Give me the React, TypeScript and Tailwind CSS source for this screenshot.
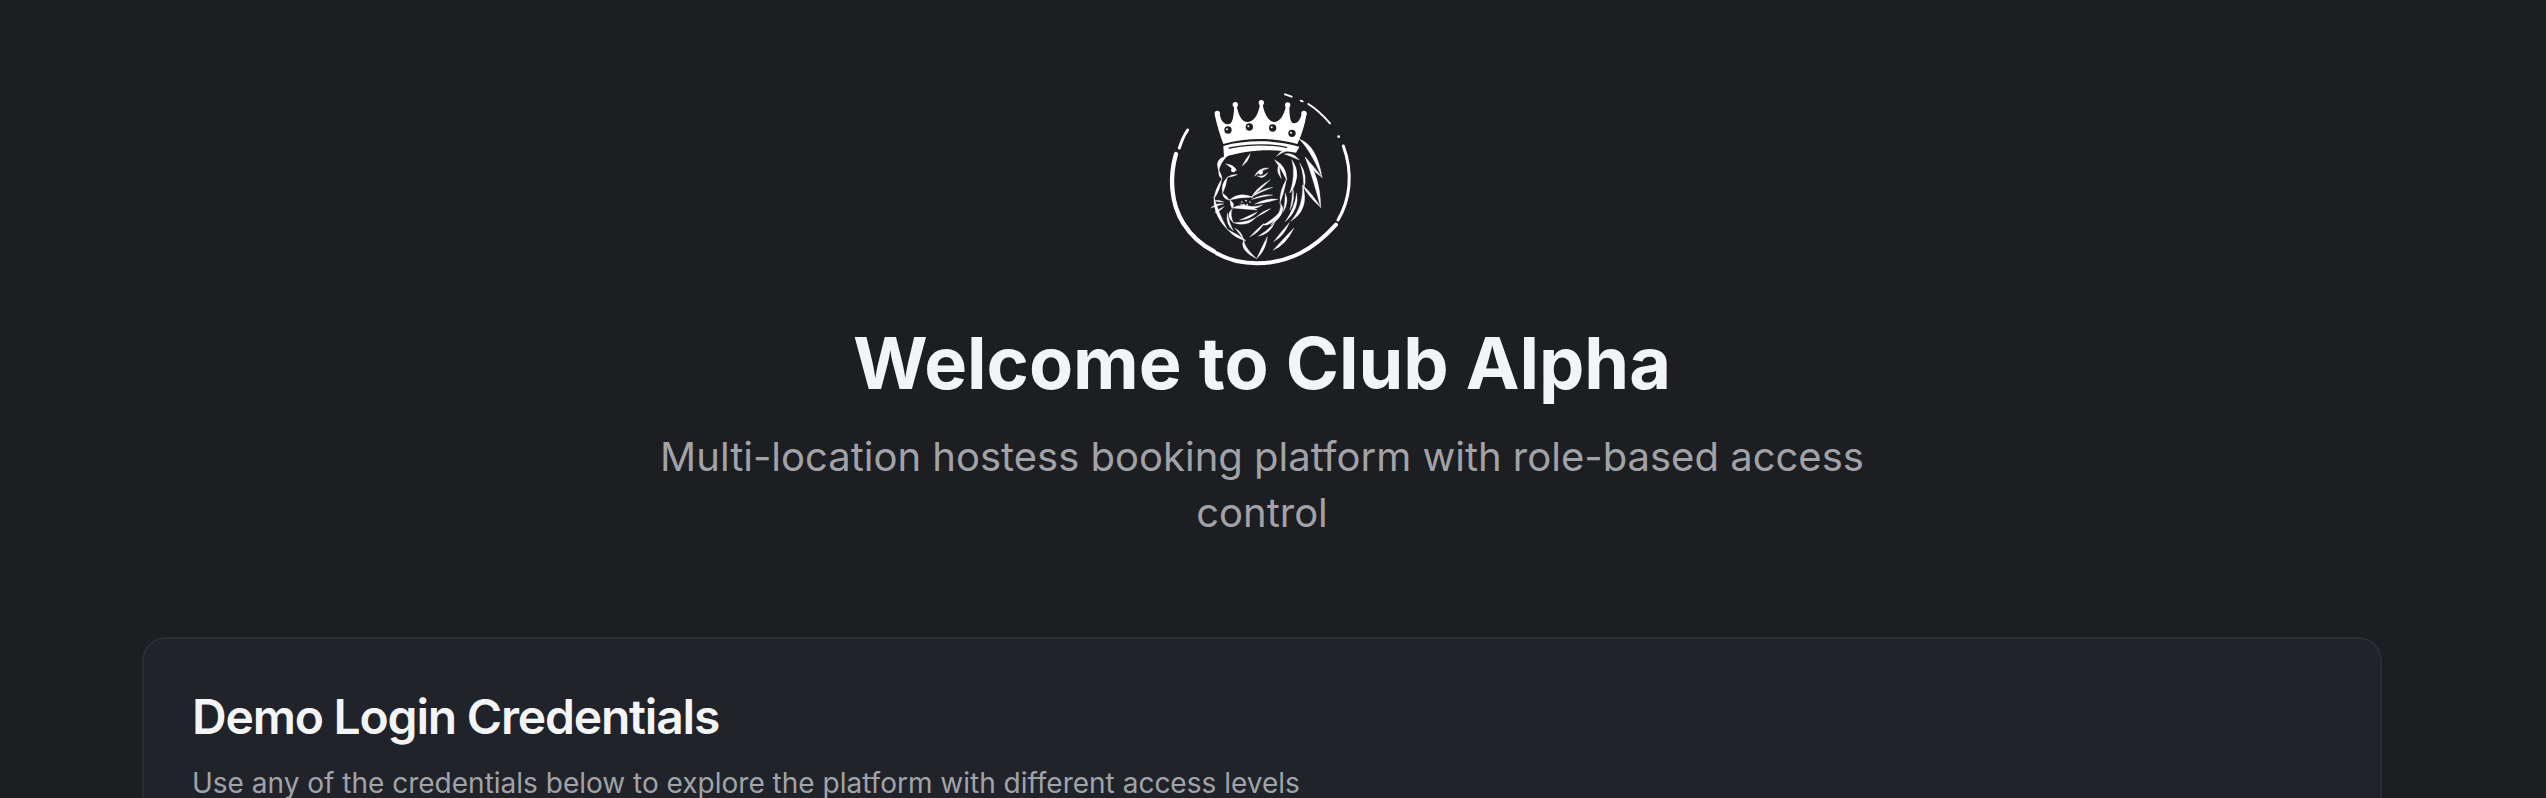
// x0, y0, cx, cy, x1, y1, width : one tapered brush stroke of the lion drawing
const strokes: number[][] = [
  // head top and left outline
  [262, 228, 232, 240, 236, 272, 8],
  [236, 268, 240, 290, 246, 296, 4],
  [246, 296, 232, 330, 222, 356, 5],
  [222, 350, 226, 400, 262, 448, 6],
  [262, 448, 290, 470, 318, 482, 5],
  [330, 222, 322, 240, 306, 258, 4],
  // brow, left eye, bridge of the nose
  [258, 252, 276, 258, 290, 272, 5],
  [262, 292, 250, 315, 248, 340, 6],
  [248, 340, 254, 352, 268, 360, 5],
  [262, 292, 276, 286, 292, 284, 3],
  // right eye
  [344, 288, 360, 266, 386, 264, 4],
  [352, 288, 368, 296, 384, 278, 3],
  [390, 300, 350, 330, 335, 352, 4],
  // muzzle, nose
  [268, 360, 300, 342, 340, 352, 6],
  [270, 360, 280, 376, 276, 384, 6],
  [276, 384, 310, 376, 352, 390, 7],
  [300, 372, 335, 392, 368, 374, 4],
  // whiskers
  [335, 350, 365, 330, 398, 322, 3],
  [336, 358, 370, 345, 398, 345, 3],
  [345, 372, 380, 360, 414, 358, 5],
  [250, 372, 232, 372, 212, 384, 3],
  [250, 366, 236, 362, 224, 362, 3],
  [252, 380, 238, 390, 224, 398, 3],
  // mouth and jaw
  [276, 388, 262, 405, 280, 428, 5],
  [280, 428, 320, 436, 348, 412, 5],
  [348, 412, 370, 396, 392, 386, 3],
  [262, 400, 262, 432, 280, 452, 4],
  [285, 445, 300, 455, 312, 482, 3],
  [312, 478, 302, 505, 350, 536, 6],
  [350, 536, 372, 505, 382, 470, 5],
  [366, 436, 395, 432, 420, 396, 5],
  [330, 470, 352, 455, 372, 430, 4],
  [400, 510, 430, 490, 462, 444, 6],
  [402, 484, 425, 465, 448, 428, 5],
  [300, 420, 330, 412, 352, 396, 4],
  [356, 468, 385, 458, 404, 428, 4],
  // right side of the face
  [404, 240, 432, 262, 440, 300, 6],
  [440, 296, 425, 335, 420, 368, 5],
  [420, 368, 438, 392, 392, 436, 6],
  [410, 228, 440, 200, 476, 205, 5],
  [434, 222, 455, 222, 478, 240, 5],
  [420, 250, 410, 270, 424, 296, 4],
  // mane
  [476, 176, 520, 200, 546, 292, 8],
  [546, 292, 516, 265, 496, 232, 5],
  [496, 232, 530, 290, 542, 382, 8],
  [542, 382, 510, 345, 488, 316, 5],
  [456, 240, 478, 285, 450, 338, 7],
  [450, 338, 470, 310, 462, 284, 3],
  [488, 316, 500, 385, 452, 424, 7],
  [470, 340, 472, 385, 436, 425, 5],
  [450, 390, 462, 360, 458, 320, 3],
  [480, 250, 500, 290, 490, 330, 4],
  [436, 340, 442, 365, 430, 395, 4],
];

const blade = ([x0, y0, cx, cy, x1, y1, w]: number[]) => {
  const dx = x1 - x0;
  const dy = y1 - y0;
  const len = Math.hypot(dx, dy) || 1;
  const nx = (-dy / len) * w * 1.5;
  const ny = (dx / len) * w * 1.5;
  return `M${x0} ${y0}Q${cx + nx} ${cy + ny} ${x1} ${y1}Q${cx - nx} ${cy - ny} ${x0} ${y0}Z`;
};

const Logo = () => (
  <svg width="216" height="216" viewBox="42 0 648 648" fill="none" stroke="#fff" strokeLinecap="round" strokeLinejoin="round">
    {/* ring */}
    <path d="M143 150 Q128 172 118 204" strokeWidth="9" />
    <path d="M108 222 C88 290 92 370 130 430 C155 470 185 495 222 514" strokeWidth="13" />
    <path d="M230 520 C300 560 400 560 480 520 C520 500 560 465 588 434" strokeWidth="12" />
    <path d="M594 420 C630 360 640 280 610 198" strokeWidth="9" />
    <path d="M435 43 L455 50 M482 62 L488 64 M505 72 Q535 90 570 130" strokeWidth="6" />
    <circle cx="596" cy="170" r="4" fill="#fff" stroke="none" />
    {/* crown */}
    <path
      d="M250 192 C238 160 230 130 224 104 L238 100 C244 125 252 135 268 132 C280 128 282 100 282 78 L290 78 C296 110 308 128 325 126 C345 122 356 100 360 72 L368 72 C372 100 385 124 402 126 C420 126 432 105 438 78 L448 78 C448 105 450 130 462 130 C475 130 482 115 486 100 L500 100 C495 135 485 165 472 192 C400 172 320 172 250 192 Z"
      fill="#fff"
      stroke="none"
    />
    <circle cx="232" cy="100" r="8" fill="#fff" stroke="none" />
    <circle cx="286" cy="74" r="8" fill="#fff" stroke="none" />
    <circle cx="364" cy="68" r="8" fill="#fff" stroke="none" />
    <circle cx="443" cy="75" r="8" fill="#fff" stroke="none" />
    <circle cx="492" cy="100" r="8" fill="#fff" stroke="none" />
    <circle cx="264" cy="150" r="11" fill="#1c1e22" stroke="none" />
    <circle cx="328" cy="141" r="11" fill="#1c1e22" stroke="none" />
    <circle cx="398" cy="144" r="11" fill="#1c1e22" stroke="none" />
    <circle cx="456" cy="160" r="11" fill="#1c1e22" stroke="none" />
    <circle cx="261" cy="148" r="3" fill="#fff" stroke="none" />
    <circle cx="325" cy="139" r="3" fill="#fff" stroke="none" />
    <circle cx="395" cy="142" r="3" fill="#fff" stroke="none" />
    <circle cx="453" cy="158" r="3" fill="#fff" stroke="none" />
    {/* band below the crown */}
    <path d="M250 198 C320 178 410 180 478 200 L468 218 C400 206 320 208 252 232 Z" fill="#fff" stroke="none" />
    <path d="M268 204 C330 192 390 192 440 202" stroke="#1c1e22" strokeWidth="4" />
    {/* lion */}
    {strokes.map((s, i) => (
      <path key={i} d={blade(s)} fill="#fff" stroke="#fff" strokeWidth="1" />
    ))}
    <circle cx="280" cy="270" r="7" fill="#fff" stroke="none" />
    <circle cx="362" cy="277" r="7" fill="#fff" stroke="none" />
    <circle cx="306" cy="366" r="2.5" fill="#fff" stroke="none" />
    <circle cx="318" cy="362" r="2.5" fill="#fff" stroke="none" />
    <circle cx="330" cy="366" r="2.5" fill="#fff" stroke="none" />
    <circle cx="322" cy="374" r="2.5" fill="#fff" stroke="none" />
    <circle cx="312" cy="374" r="2.5" fill="#fff" stroke="none" />
  </svg>
);

const App = () => {
  return (
    <div className="h-screen w-full overflow-hidden bg-[#1c1e22] font-['Inter',sans-serif]">
      <div className="w-[2524px]">
        <div className="flex flex-col items-center pt-[80px]">
          <Logo />
          <h1 className="mt-[27px] text-[72px] leading-[80px] font-bold text-[#f3f4f6]">Welcome to Club Alpha</h1>
          <p className="mt-[26px] max-w-[1280px] text-center text-[40px] leading-[56px] text-[#a1a3a9]">
            Multi-location hostess booking platform with role-based access control
          </p>
        </div>
        <div className="mx-auto mt-[96px] h-[400px] w-[2240px] rounded-[24px] border-2 border-[#2a2d33] bg-[#20232a] px-[48px] pt-[54px]">
          <h2 className="text-[48px] leading-[48px] font-semibold tracking-tight text-[#f3f4f6]">Demo Login Credentials</h2>
          <p className="mt-[26px] text-[28px] leading-[32px] text-[#a1a3a9]">
            Use any of the credentials below to explore the platform with different access levels
          </p>
        </div>
      </div>
    </div>
  );
};

export default App;
